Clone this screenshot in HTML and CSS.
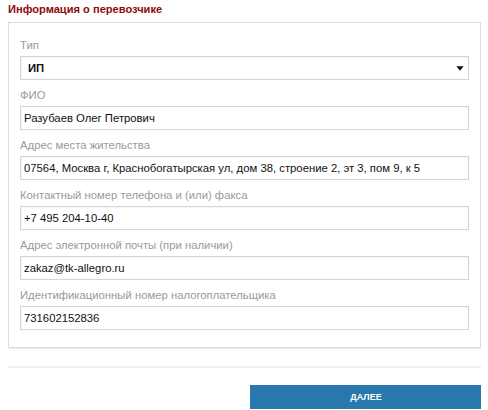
FILE: index.html
```html
<!DOCTYPE html>
<html lang="ru">
<head>
<meta charset="utf-8">
<title>Информация о перевозчике</title>
<link rel="stylesheet" href="styles.css">
</head>
<body>
<h2 class="section-title">Информация о перевозчике</h2>
<div class="panel">
  <div class="field">
    <label class="field-label">Тип</label>
    <div class="select">
      <span class="select-value">ИП</span>
      <svg class="select-arrow" width="8" height="5" viewBox="0 0 8 5"><path d="M0.3 0.3 H7.7 L4 4.8 Z" fill="#111"/></svg>
    </div>
  </div>
  <div class="field">
    <label class="field-label">ФИО</label>
    <input class="text-input" type="text" value="Разубаев Олег Петрович" readonly>
  </div>
  <div class="field">
    <label class="field-label">Адрес места жительства</label>
    <input class="text-input" type="text" value="07564, Москва г, Краснобогатырская ул, дом 38, строение 2, эт 3, пом 9, к 5" readonly>
  </div>
  <div class="field">
    <label class="field-label">Контактный номер телефона и (или) факса</label>
    <input class="text-input" type="text" value="+7 495 204-10-40" readonly>
  </div>
  <div class="field">
    <label class="field-label">Адрес электронной почты (при наличии)</label>
    <input class="text-input" type="text" value="zakaz@tk-allegro.ru" readonly>
  </div>
  <div class="field">
    <label class="field-label">Идентификационный номер налогоплательщика</label>
    <input class="text-input" type="text" value="731602152836" readonly>
  </div>
</div>
<hr class="divider">
<div class="actions">
  <button class="btn-next" type="button">ДАЛЕЕ</button>
</div>
</body>
</html>
```

FILE: styles.css
```css
html, body {
  background: #fff;
}

body {
  margin: 0 7px 0 8px;
  font-family: "Liberation Sans", Arial, sans-serif;
  font-size: 11.3px;
  color: #222;
}

.section-title {
  margin: 0 0 4px;
  font-size: 11.1px;
  line-height: 18px;
  font-weight: bold;
  color: #8b0b0b;
}

.panel {
  border: 1px solid #dcdcdc;
  box-shadow: 1px 1px 0 #ececec;
  padding: 14px 11px 17px;
  display: flex;
  flex-direction: column;
  gap: 7px;
}

.field {
  display: flex;
  flex-direction: column;
  gap: 3px;
}

.field-label {
  display: block;
  line-height: 16px;
  color: #9a9a9a;
  font-size: 11.3px;
}

.select,
.text-input {
  box-sizing: border-box;
  height: 24px;
  border: 1px solid #d6d6d6;
  border-right-color: #cfcfcf;
  box-shadow: inset 1px 1px 1px rgba(0, 0, 0, 0.04);
  background: #fff;
}

.select {
  display: flex;
  align-items: center;
  justify-content: space-between;
  padding: 0 4px 0 7px;
}

.select-value {
  font-weight: bold;
  color: #111;
}

.select-arrow {
  display: block;
}

.text-input {
  width: 100%;
  margin: 0;
  padding: 0 3px;
  font-family: inherit;
  font-size: 11.3px;
  color: #111;
  outline: none;
}

.divider {
  margin: 18px 0 0;
  border: 0;
  height: 2px;
  background: #efefef;
}

.actions {
  display: flex;
  justify-content: flex-end;
  margin-top: 17px;
}

.btn-next {
  width: 232px;
  height: 24px;
  border: 0;
  margin: 0 -1px 0 0;
  background: #2878ad;
  color: #fff;
  font-family: "Liberation Sans", Arial, sans-serif;
  font-size: 9px;
  font-weight: bold;
  cursor: pointer;
}
```
